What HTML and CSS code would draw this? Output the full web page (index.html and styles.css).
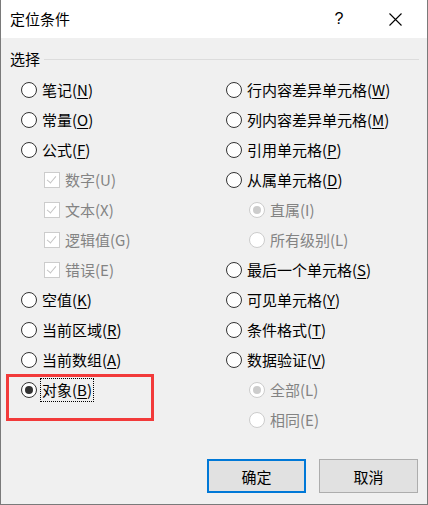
FILE: index.html
```html
<!DOCTYPE html>
<html lang="zh-CN">
<head>
    <meta charset="UTF-8">
    <title>定位条件</title>
    <link rel="stylesheet" href="styles.css">
</head>
<body>
    <div class="dialog">
        <div class="titlebar">
            <span class="title">定位条件</span>
            <span class="help-btn">?</span>
            <span class="close-btn">
                <svg width="13" height="13" viewBox="0 0 13 13">
                    <path d="M0.5 0.5 L12.5 12.5 M12.5 0.5 L0.5 12.5" stroke="#000" stroke-width="1.1" fill="none"/>
                </svg>
            </span>
        </div>

        <div class="content">
            <div class="group-head">
                <span>选择</span>
                <span class="group-line"></span>
            </div>

            <div class="options">
                <div class="col col-left">
                    <div class="item"><span class="radio"></span><span class="label">笔记(<u>N</u>)</span></div>
                    <div class="item"><span class="radio"></span><span class="label">常量(<u>O</u>)</span></div>
                    <div class="item"><span class="radio"></span><span class="label">公式(<u>F</u>)</span></div>
                    <div class="item sub disabled"><span class="check"></span><span class="label">数字(U)</span></div>
                    <div class="item sub disabled"><span class="check"></span><span class="label">文本(X)</span></div>
                    <div class="item sub disabled"><span class="check"></span><span class="label">逻辑值(G)</span></div>
                    <div class="item sub disabled"><span class="check"></span><span class="label">错误(E)</span></div>
                    <div class="item"><span class="radio"></span><span class="label">空值(<u>K</u>)</span></div>
                    <div class="item"><span class="radio"></span><span class="label">当前区域(<u>R</u>)</span></div>
                    <div class="item"><span class="radio"></span><span class="label">当前数组(<u>A</u>)</span></div>
                    <div class="item focused"><span class="radio checked"></span><span class="label">对象(<u>B</u>)</span></div>
                </div>
                <div class="col col-right">
                    <div class="item"><span class="radio"></span><span class="label">行内容差异单元格(<u>W</u>)</span></div>
                    <div class="item"><span class="radio"></span><span class="label">列内容差异单元格(<u>M</u>)</span></div>
                    <div class="item"><span class="radio"></span><span class="label">引用单元格(<u>P</u>)</span></div>
                    <div class="item"><span class="radio"></span><span class="label">从属单元格(<u>D</u>)</span></div>
                    <div class="item sub disabled"><span class="radio checked"></span><span class="label">直属(I)</span></div>
                    <div class="item sub disabled"><span class="radio"></span><span class="label">所有级别(L)</span></div>
                    <div class="item"><span class="radio"></span><span class="label">最后一个单元格(<u>S</u>)</span></div>
                    <div class="item"><span class="radio"></span><span class="label">可见单元格(<u>Y</u>)</span></div>
                    <div class="item"><span class="radio"></span><span class="label">条件格式(<u>T</u>)</span></div>
                    <div class="item"><span class="radio"></span><span class="label">数据验证(<u>V</u>)</span></div>
                    <div class="item sub disabled"><span class="radio checked"></span><span class="label">全部(L)</span></div>
                    <div class="item sub disabled"><span class="radio"></span><span class="label">相同(E)</span></div>
                </div>
            </div>

            <div class="buttons">
                <button class="btn btn-default">确定</button>
                <button class="btn">取消</button>
            </div>
        </div>

        <!-- annotation box -->
        <div class="highlight"></div>
    </div>
</body>
</html>
```

FILE: styles.css
```css
body {
    margin: 0;
    font-family: "Noto Sans CJK SC", "Noto Sans", sans-serif;
    font-size: 15px;
    color: #000;
}

.dialog {
    position: relative;
    width: 428px;
    height: 505px;
    box-sizing: border-box;
    border-left: 1px solid #7a7a7a;
    border-right: 1px solid #7a7a7a;
    border-bottom: 1px solid #7a7a7a;
    background-color: #f0f0f0;
    display: flex;
    flex-direction: column;
}

.titlebar {
    height: 38px;
    background-color: white;
    display: flex;
    align-items: center;
    padding-left: 9px;
}

.title {
    flex: 1;
    line-height: 20px;
}

.help-btn {
    width: 46px;
    margin-right: 10px;
    text-align: center;
    font-family: "Liberation Sans", sans-serif;
    font-size: 16px;
    line-height: 20px;
}

.close-btn {
    width: 47px;
    margin-right: 8px;
    display: flex;
    justify-content: center;
    align-items: center;
}

.content {
    flex: 1;
    display: flex;
    flex-direction: column;
    padding-top: 9px;
}

.group-head {
    height: 23px;
    display: flex;
    align-items: center;
    padding-left: 9px;
    padding-right: 8px;
    line-height: 20px;
}

.group-line {
    flex: 1;
    height: 1px;
    margin-left: 4px;
    margin-top: 1px;
    background-color: #dcdcdc;
}

.options {
    display: flex;
    margin-top: 5px;
    padding-left: 20px;
}

.col {
    display: flex;
    flex-direction: column;
}

.col-left {
    width: 205px;
}

.item {
    height: 30px;
    display: flex;
    align-items: center;
    gap: 5px;
}

.item.sub {
    padding-left: 23px;
}

.label {
    line-height: 20px;
    white-space: nowrap;
}

.label u {
    text-decoration-thickness: 1px;
    text-underline-offset: 2px;
}

.radio {
    position: relative;
    width: 16px;
    height: 16px;
    box-sizing: border-box;
    border: 1px solid #333;
    border-radius: 50%;
    background-color: white;
    flex-shrink: 0;
}

.radio.checked::after {
    content: "";
    position: absolute;
    left: 3px;
    top: 3px;
    width: 8px;
    height: 8px;
    border-radius: 50%;
    background-color: #333;
}

.check {
    position: relative;
    width: 16px;
    height: 16px;
    box-sizing: border-box;
    border: 1px solid #cccccc;
    background-color: white;
    flex-shrink: 0;
}

.check::after {
    content: "";
    position: absolute;
    left: 4px;
    top: 1px;
    width: 4px;
    height: 8px;
    border-right: 1px solid #c4c4c4;
    border-bottom: 1px solid #c4c4c4;
    transform: rotate(40deg);
}

.disabled .label {
    color: #838383;
}

.disabled .radio {
    border-color: #cccccc;
}

.disabled .radio.checked::after {
    background-color: #cccccc;
}

.focused {
    gap: 3px;
}

.focused .label {
    border: 1px dotted #000;
    padding: 1px 1px;
}

.buttons {
    margin-top: auto;
    display: flex;
    justify-content: flex-end;
    gap: 13px;
    padding-right: 9px;
    padding-bottom: 11px;
}

.btn {
    width: 99px;
    height: 34px;
    box-sizing: border-box;
    border: 1px solid #adadad;
    background-color: #e1e1e1;
    font-family: "Noto Sans CJK SC", sans-serif;
    font-size: 15px;
    color: #000;
    padding: 0;
}

.btn-default {
    border: 2px solid #0078d7;
}

.highlight {
    position: absolute;
    left: 5px;
    top: 374px;
    width: 148px;
    height: 47px;
    box-sizing: border-box;
    border: 3px solid #f23a3a;
}
```
